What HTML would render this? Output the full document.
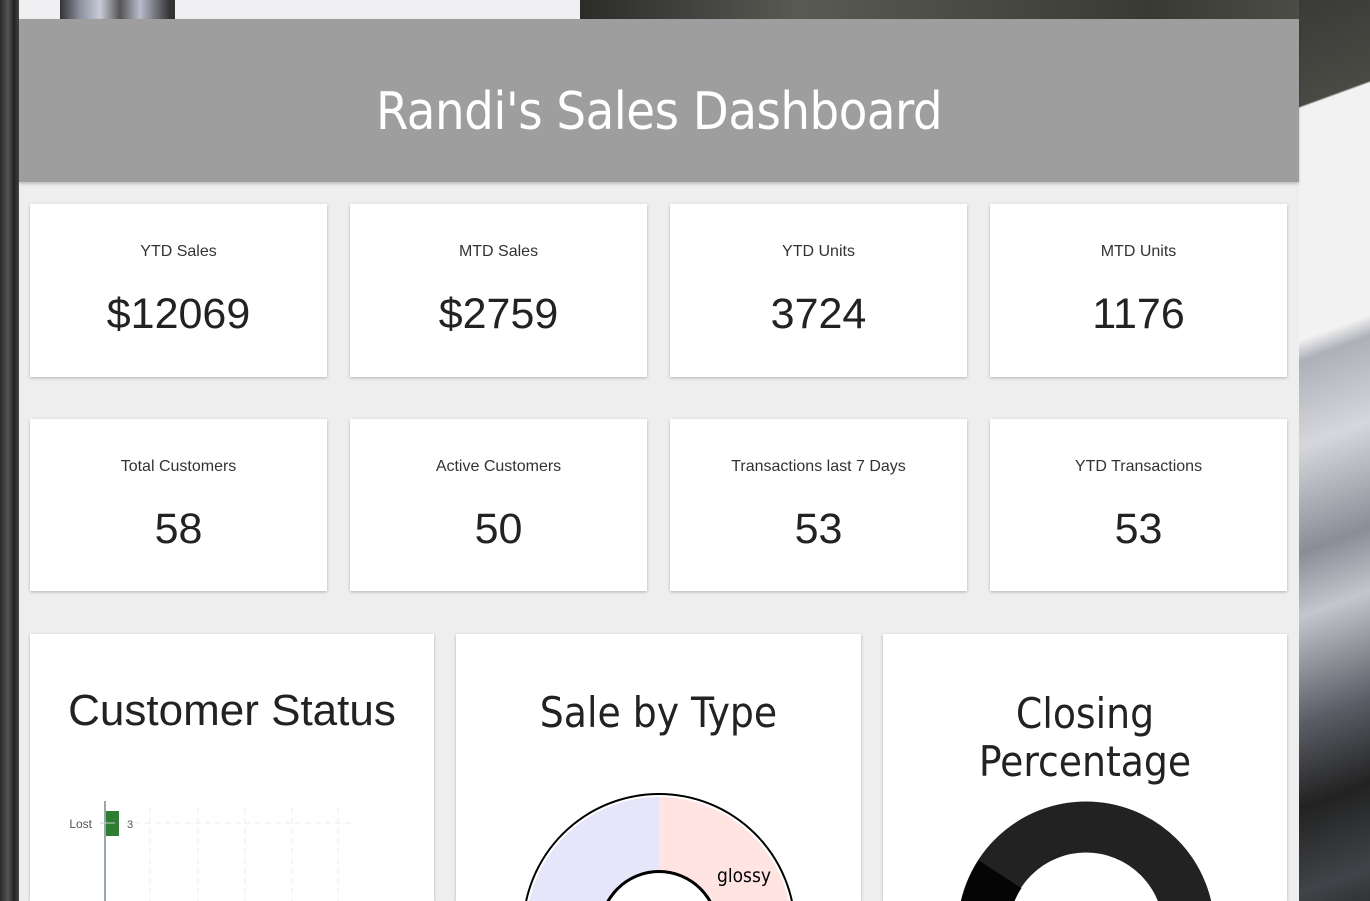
<!DOCTYPE html>
<html><head><meta charset="utf-8"><style>
*{margin:0;padding:0;box-sizing:border-box}
html{width:1370px;height:901px;overflow:hidden}
body{width:1370px;height:901px;overflow:hidden;position:relative;font-family:"Liberation Sans","DejaVu Sans",sans-serif;
background:linear-gradient(90deg,#2a2a2a 0,#555 8px,#222 14px,#444 19px,#f0f0f2 19px,#f0f0f2 580px,#2b2b28 580px,#5a5a55 800px,#3a3a35 1150px,#55554f 1370px);}
.lb{position:absolute;left:60px;top:0;width:115px;height:19px;background:linear-gradient(90deg,#333 0,#8c90a0 20px,#c9ccd8 40px,#555 60px,#b8bccb 80px,#333 110px)}
.rb{position:absolute;left:1299px;top:0;width:71px;height:901px;
background:linear-gradient(160deg,#3a3a36 0,#4a4a45 100px,#f2f2f2 102px,#f2f2f2 320px,#aeb0b8 340px,#d5d7dc 420px,#8a8d96 520px,#c3c6cc 580px,#5b5e66 680px,#222 760px,#404448 840px,#222 901px);}
.wrap{position:absolute;left:19px;top:19px;width:1280px;height:882px;background:#eeeeee}
.hdr{height:163px;background:#9e9e9e;box-shadow:0 2px 3px rgba(0,0,0,.2);color:#fff;font-size:52px;text-align:center;line-height:186px;font-family:"DejaVu Sans Condensed","DejaVu Sans",sans-serif;font-weight:normal;letter-spacing:-0.5px}
.card{position:absolute;background:#fff;box-shadow:0 1px 3px rgba(0,0,0,.25);text-align:center;color:#222}
.card .t{font-size:16px;margin-top:39px;color:#333}
.card .v{font-size:43px;margin-top:29px;font-family:"Liberation Sans",sans-serif;color:#222}
.big{position:absolute;background:#fff;box-shadow:0 1px 3px rgba(0,0,0,.25);overflow:hidden;height:267px}
</style></head><body>
<div class="lb"></div>
<div class="rb"></div>
<div class="wrap"><div class="hdr">Randi's Sales Dashboard</div></div>

<div class="card" style="left:30px;top:204px;width:297px;height:173px"><div class="t">YTD Sales</div><div class="v">$12069</div></div>
<div class="card" style="left:350px;top:204px;width:297px;height:173px"><div class="t">MTD Sales</div><div class="v">$2759</div></div>
<div class="card" style="left:670px;top:204px;width:297px;height:173px"><div class="t">YTD Units</div><div class="v">3724</div></div>
<div class="card" style="left:990px;top:204px;width:297px;height:173px"><div class="t">MTD Units</div><div class="v">1176</div></div>

<div class="card" style="left:30px;top:419px;width:297px;height:172px"><div class="t">Total Customers</div><div class="v">58</div></div>
<div class="card" style="left:350px;top:419px;width:297px;height:172px"><div class="t">Active Customers</div><div class="v">50</div></div>
<div class="card" style="left:670px;top:419px;width:297px;height:172px"><div class="t">Transactions last 7 Days</div><div class="v">53</div></div>
<div class="card" style="left:990px;top:419px;width:297px;height:172px"><div class="t">YTD Transactions</div><div class="v">53</div></div>

<div class="big" style="left:30px;top:634px;width:404px">
<div style="position:absolute;left:0;width:404px;top:52px;text-align:center;font-size:44px;color:#222">Customer Status</div>
<svg width="404" height="267" style="position:absolute;left:0;top:0">
<g stroke="#eee" stroke-dasharray="6,4"><line x1="120" y1="174" x2="120" y2="267"/><line x1="168" y1="174" x2="168" y2="267"/><line x1="215" y1="174" x2="215" y2="267"/><line x1="262" y1="174" x2="262" y2="267"/><line x1="308" y1="174" x2="308" y2="267"/><line x1="75" y1="189" x2="325" y2="189"/></g>
<rect x="76" y="177" width="13" height="25" fill="#2e7d32"/>
<line x1="75" y1="167" x2="75" y2="267" stroke="#9aa6b0" stroke-width="2"/>
<line x1="70" y1="189" x2="85" y2="189" stroke="#ccc"/>
<text x="62" y="194" font-size="12" fill="#555" text-anchor="end" font-family="Liberation Sans">Lost</text>
<text x="97" y="194" font-size="11" fill="#556" font-family="Liberation Sans">3</text>
</svg></div>

<div class="big" style="left:456px;top:634px;width:405px">
<div style="position:absolute;left:0;width:405px;top:54px;text-align:center;font-size:42px;color:#222;font-family:'DejaVu Sans Condensed','DejaVu Sans',sans-serif">Sale by Type</div>
<svg width="405" height="267" style="position:absolute;left:0;top:0">
<circle cx="203" cy="296" r="137" fill="#000"/>
<path d="M203 162 A134 134 0 0 1 337 296 L261 296 A58 58 0 0 0 203 238Z" fill="#ffe4e1"/>
<path d="M203 162 A134 134 0 0 0 69 296 L145 296 A58 58 0 0 1 203 238Z" fill="#e6e6fa"/>
<circle cx="203" cy="296" r="134" fill="none" stroke="#fff" stroke-width="2"/>
<circle cx="203" cy="296" r="60" fill="#000"/>
<circle cx="203" cy="296" r="57" fill="#fff"/>
<text x="261" y="248" font-size="19" fill="#000" font-family="DejaVu Sans Condensed,DejaVu Sans">glossy</text>
</svg></div>

<div class="big" style="left:883px;top:634px;width:404px">
<div style="position:absolute;left:0;width:404px;top:56px;text-align:center;font-size:42px;line-height:48px;color:#222;font-family:'DejaVu Sans Condensed','DejaVu Sans',sans-serif">Closing<br>Percentage</div>
<svg width="404" height="267" style="position:absolute;left:0;top:0">
<circle cx="203" cy="296" r="103" fill="none" stroke="#222" stroke-width="51"/>
<path d="M95.6 226.3 A128 128 0 0 0 75 296 L126 296 A77 77 0 0 1 138.4 254.1Z" fill="#050505"/>
</svg></div>
</body></html>
